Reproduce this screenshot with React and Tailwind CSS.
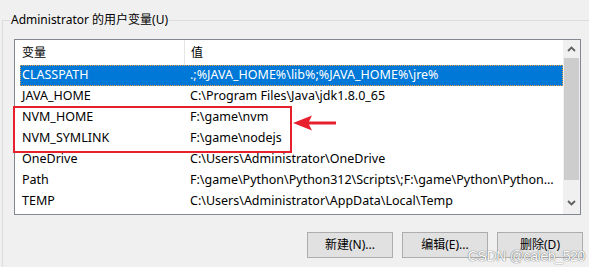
const rows = [
  { name: "CLASSPATH", value: ".;%JAVA_HOME%\\lib%;%JAVA_HOME%\\jre%", selected: true },
  { name: "JAVA_HOME", value: "C:\\Program Files\\Java\\jdk1.8.0_65" },
  { name: "NVM_HOME", value: "F:\\game\\nvm" },
  { name: "NVM_SYMLINK", value: "F:\\game\\nodejs" },
  { name: "OneDrive", value: "C:\\Users\\Administrator\\OneDrive" },
  { name: "Path", value: "F:\\game\\Python\\Python312\\Scripts\\;F:\\game\\Python\\Python312\\;C:\\Windows" },
  { name: "TEMP", value: "C:\\Users\\Administrator\\AppData\\Local\\Temp" },
];

const font = { fontFamily: '"Noto Sans", "Noto Sans CJK SC", sans-serif' };

function Chevron({ up }) {
  return (
    <svg width="9" height="6" viewBox="0 0 9 6">
      <path
        d={up ? "M1 5 L4.5 1.5 L8 5" : "M1 1 L4.5 4.5 L8 1"}
        fill="none"
        stroke="#606060"
        strokeWidth="1.8"
      />
    </svg>
  );
}

export default function App() {
  return (
    <div
      className="relative w-[589px] h-[267px] bg-[#f0f0f0] overflow-hidden text-[12px] text-black"
      style={font}
    >
      <div className="ml-[2px] mt-[20px] h-[247px] border-l border-t border-[#dcdcdc] pl-[11px] pt-[18px]">
        <div className="flex w-[567px] h-[176px] border border-[#828790] bg-white">
          <div className="flex-1 min-w-0 overflow-hidden flex flex-col">
            <div className="flex h-[25px] items-center">
              <div className="w-[169px] pl-[7px] leading-none">变量</div>
              <div className="w-px h-full bg-[#e5e5e5]" />
              <div className="pl-[6px] leading-none">值</div>
            </div>
            {rows.map((r) => (
              <div
                key={r.name}
                className={
                  r.selected
                    ? "flex h-[21px] items-center ml-[5px] text-[12.5px] bg-[#0078d7] text-white border border-dotted border-[#f0a040]"
                    : "flex h-[21px] items-center ml-[5px] text-[12.5px] border border-transparent"
                }
              >
                <div className="w-[169px] shrink-0 pl-[1px] whitespace-nowrap">{r.name}</div>
                <div className="flex-1 min-w-0 pr-[5px] whitespace-nowrap overflow-hidden text-ellipsis">
                  {r.value}
                </div>
              </div>
            ))}
          </div>
          <div className="w-[17px] shrink-0 flex flex-col bg-[#f0f0f0]">
            <div className="h-[18px] flex items-center justify-center">
              <Chevron up />
            </div>
            <div className="mx-px h-[122px] bg-[#cdcdcd]" />
            <div className="flex-1 flex items-end justify-center pb-[8px]">
              <Chevron />
            </div>
          </div>
        </div>
        <div className="flex justify-end gap-[9px] mt-[17px] pr-[6px]">
          {["新建(N)...", "编辑(E)...", "删除(D)"].map((b) => (
            <button
              key={b}
              className="w-[86px] h-[26px] bg-[#e1e1e1] border border-[#adadad] text-[12px] leading-none"
            >
              {b}
            </button>
          ))}
        </div>
      </div>

      <div className="absolute left-[10px] top-[11px] px-[1px] bg-[#f0f0f0] leading-[18px]">
        Administrator 的用户变量(U)
      </div>

      <div className="absolute left-[13px] top-[106px] w-[279px] h-[47px] border-2 border-[#e8202e]" />
      <svg className="absolute left-[292px] top-[114px]" width="46" height="18" viewBox="0 0 46 18">
        <path d="M1 9 L20 1.5 L17 7.5 L44 7.5 L44 10.5 L17 10.5 L20 16.5 Z" fill="#e8202e" />
      </svg>

      <div
        className="absolute right-[4px] bottom-[4px] text-[14px] leading-none text-[#fafafa] tracking-tight"
        style={{ fontFamily: '"Liberation Sans", sans-serif', textShadow: "0 0 1px #777, 0 0 1px #777" }}
      >
        CSDN @caleb_520
      </div>
    </div>
  );
}
